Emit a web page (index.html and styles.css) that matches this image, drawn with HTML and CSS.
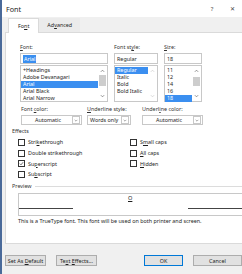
FILE: index.html
```html
<!DOCTYPE html>
<html lang="en">
<head>
    <meta charset="UTF-8">
    <title>Font</title>
    <link rel="stylesheet" href="styles.css">
</head>
<body>
    <div class="dialog">
        <div class="titlebar">
            <span class="title">Font</span>
            <span class="title-btn help">?</span>
            <span class="title-btn close">✕</span>
        </div>

        <div class="tabs">
            <div class="tab active">Fo<u>n</u>t</div>
            <div class="tab">Ad<u>v</u>anced</div>
        </div>

        <div class="panel">
            <div class="fields">
                <div class="field col-font">
                    <div class="label"><u>F</u>ont:</div>
                    <div class="input"><span class="sel-text">Arial</span></div>
                    <div class="list">
                        <div class="item">+Headings</div>
                        <div class="item">Adobe Devanagari</div>
                        <div class="item selected">Arial</div>
                        <div class="item">Arial Black</div>
                        <div class="item">Arial Narrow</div>
                        <div class="scroll">
                            <svg class="arrow" viewBox="0 0 6 4"><path d="M1 3L3 1L5 3" fill="none" stroke="#606060" stroke-width="0.8"/></svg>
                            <div class="thumb thumb-font"></div>
                            <svg class="arrow" viewBox="0 0 6 4"><path d="M1 1L3 3L5 1" fill="none" stroke="#606060" stroke-width="0.8"/></svg>
                        </div>
                    </div>
                </div>
                <div class="field col-style">
                    <div class="label">Font st<u>y</u>le:</div>
                    <div class="input">Regular</div>
                    <div class="list">
                        <div class="item selected">Regular</div>
                        <div class="item">Italic</div>
                        <div class="item">Bold</div>
                        <div class="item">Bold Italic</div>
                        <div class="scroll disabled">
                            <svg class="arrow" viewBox="0 0 6 4"><path d="M1 3L3 1L5 3" fill="none" stroke="#c8c8c8" stroke-width="0.8"/></svg>
                            <svg class="arrow" viewBox="0 0 6 4"><path d="M1 1L3 3L5 1" fill="none" stroke="#c8c8c8" stroke-width="0.8"/></svg>
                        </div>
                    </div>
                </div>
                <div class="field col-size">
                    <div class="label"><u>S</u>ize:</div>
                    <div class="input">18</div>
                    <div class="list">
                        <div class="item">11</div>
                        <div class="item">12</div>
                        <div class="item">14</div>
                        <div class="item">16</div>
                        <div class="item selected">18</div>
                        <div class="scroll">
                            <svg class="arrow" viewBox="0 0 6 4"><path d="M1 3L3 1L5 3" fill="none" stroke="#606060" stroke-width="0.8"/></svg>
                            <div class="thumb thumb-size"></div>
                            <svg class="arrow" viewBox="0 0 6 4"><path d="M1 1L3 3L5 1" fill="none" stroke="#606060" stroke-width="0.8"/></svg>
                        </div>
                    </div>
                </div>
            </div>

            <div class="combos">
                <div class="combo-field cf-color">
                    <div class="label">Font <u>c</u>olor:</div>
                    <div class="combo center"><span class="combo-text">Automatic</span><span class="drop"><svg viewBox="0 0 6 4"><path d="M1 1L3 3L5 1" fill="none" stroke="#606060" stroke-width="0.8"/></svg></span></div>
                </div>
                <div class="combo-field cf-ustyle">
                    <div class="label"><u>U</u>nderline style:</div>
                    <div class="combo"><span class="combo-text">Words only</span><span class="drop"><svg viewBox="0 0 6 4"><path d="M1 1L3 3L5 1" fill="none" stroke="#606060" stroke-width="0.8"/></svg></span></div>
                </div>
                <div class="combo-field cf-ucolor">
                    <div class="label">Underl<u>i</u>ne color:</div>
                    <div class="combo center"><span class="combo-text">Automatic</span><span class="drop"><svg viewBox="0 0 6 4"><path d="M1 1L3 3L5 1" fill="none" stroke="#606060" stroke-width="0.8"/></svg></span></div>
                </div>
            </div>

            <div class="group-head">Effects</div>
            <div class="effects">
                <div class="effects-col">
                    <div class="check"><span class="box"></span><span>Stri<u>k</u>ethrough</span></div>
                    <div class="check"><span class="box"></span><span>Double strikethrough</span></div>
                    <div class="check"><span class="box"><svg viewBox="0 0 6 6"><path d="M1 3.2L2.4 4.6L5 1.4" fill="none" stroke="#333" stroke-width="0.8"/></svg></span><span>Su<u>p</u>erscript</span></div>
                    <div class="check"><span class="box"></span><span>Su<u>b</u>script</span></div>
                </div>
                <div class="effects-col right">
                    <div class="check"><span class="box"></span><span>S<u>m</u>all caps</span></div>
                    <div class="check"><span class="box"></span><span><u>A</u>ll caps</span></div>
                    <div class="check"><span class="box"></span><span><u>H</u>idden</span></div>
                </div>
            </div>

            <div class="group-head line">Preview</div>
            <div class="preview">
                <span class="pline"></span>
                <span class="sample"><u>O</u></span>
                <span class="pline"></span>
            </div>
            <div class="note">This is a TrueType font. This font will be used on both printer and screen.</div>
        </div>

        <div class="footer">
            <button class="btn">Set As <u>D</u>efault</button>
            <button class="btn">Te<u>x</u>t <u>E</u>ffects...</button>
            <span class="spacer"></span>
            <button class="btn primary">OK</button>
            <button class="btn">Cancel</button>
        </div>
    </div>
</body>
</html>
```

FILE: styles.css
```css
body {
    margin: 0;
    width: 242px;
    height: 274px;
    overflow: hidden;
    background: #f0f0f0;
    font-family: "Noto Sans", "Open Sans", sans-serif;
    font-size: 5.4px;
    color: #1e1e1e;
}
u {
    text-decoration-thickness: 0.5px;
    text-underline-offset: 0.6px;
}
.dialog {
    display: flex;
    flex-direction: column;
    height: 274px;
    border-left: 2px solid #4a6a9a;
    box-sizing: border-box;
}
.titlebar {
    display: flex;
    align-items: center;
    height: 17px;
    background: #ffffff;
    padding-left: 4px;
}
.title {
    font-size: 7.2px;
    color: #222;
    flex: 1;
}
.title-btn {
    font-size: 6px;
    color: #444;
    width: 20px;
    text-align: center;
}
.close {
    font-size: 5.5px;
}
.tabs {
    display: flex;
    height: 15px;
    padding-left: 6px;
    align-items: flex-end;
}
.tab {
    height: 14px;
    line-height: 14px;
    padding: 0 8px;
    background: #ebebeb;
    box-sizing: border-box;
}
.tab.active {
    background: #ffffff;
    border: 1px solid #dadada;
    border-bottom: none;
    height: 15px;
    margin-bottom: -1px;
    position: relative;
    padding: 0 9px;
}
.panel {
    height: 212px;
    margin-left: 3px;
    background: #ffffff;
    border: 1px solid #dadada;
    border-right: none;
    box-sizing: border-box;
    padding: 11px 0 0 6px;
}
.fields {
    display: flex;
    gap: 6px;
    padding-left: 8px;
}
.label {
    height: 7px;
    line-height: 7px;
    margin-bottom: 2px;
    color: #333;
}
.input {
    height: 11px;
    line-height: 10px;
    border: 1px solid #c8c8c8;
    box-sizing: border-box;
    padding-left: 2px;
    margin-bottom: 1px;
}
.sel-text {
    background: #3b8ff0;
    color: #ffffff;
    padding: 0 1px;
}
.list {
    position: relative;
    height: 37px;
    border: 1px solid #c8c8c8;
    box-sizing: border-box;
    padding-top: 1px;
}
.item {
    height: 7px;
    line-height: 7px;
    padding-left: 2px;
    margin-right: 9px;
}
.item.selected {
    background: #3b8ff0;
    color: #ffffff;
}
.scroll {
    position: absolute;
    top: 1px;
    right: 1px;
    bottom: 1px;
    width: 8px;
    display: flex;
    flex-direction: column;
    align-items: center;
}
.arrow {
    width: 5px;
    height: 4px;
    margin: 2px 0;
}
.scroll .arrow:last-child {
    margin-top: auto;
}
.thumb {
    width: 7px;
    background: #cdcdcd;
}
.thumb-font {
    height: 11px;
}
.thumb-size {
    height: 9px;
    margin-top: 2px;
}
.col-font { width: 88px; }
.col-style { width: 44px; }
.col-size { width: 38px; }

.combos {
    display: flex;
    margin-top: 4px;
    padding-left: 9px;
}
.cf-color { width: 61px; }
.cf-ustyle { width: 44px; margin-left: 5px; }
.cf-ucolor { width: 61px; margin-left: 11px; }
.combo {
    display: flex;
    align-items: center;
    height: 10px;
    border: 1px solid #c8c8c8;
    box-sizing: border-box;
    padding-left: 2px;
}
.combo-text {
    flex: 1;
}
.combo.center .combo-text {
    text-align: center;
}
.drop {
    width: 6px;
    height: 6px;
    border: 1px solid #c8c8c8;
    margin-right: 1px;
    display: flex;
    align-items: center;
    justify-content: center;
}
.drop svg {
    width: 4px;
    height: 3px;
}
.group-head {
    height: 7px;
    line-height: 7px;
    margin-top: 3px;
    color: #333;
    display: flex;
    align-items: center;
    gap: 3px;
}
.group-head.line::after {
    content: "";
    flex: 1;
    border-top: 1px solid #dcdcdc;
}
.effects {
    display: flex;
    padding: 2px 0 0 6px;
}
.effects-col {
    width: 149px;
}
.check {
    display: flex;
    align-items: center;
    height: 10.7px;
    gap: 3px;
}
.box {
    width: 5px;
    height: 5px;
    border: 0.8px solid #333;
    background: #fff;
    display: flex;
}
.box svg {
    width: 5px;
    height: 5px;
}
.preview {
    display: flex;
    align-items: flex-start;
    height: 23px;
    margin: 3px 0 0 6px;
    border: 1px solid #c8c8c8;
    border-right: none;
    box-sizing: border-box;
}
.pline {
    width: 54px;
    border-top: 1px solid #444;
    margin-top: 14px;
}
.pline:last-child {
    margin-left: auto;
}
.sample {
    margin-left: 55px;
    font-size: 5.6px;
    line-height: 7px;
    margin-top: 1px;
}
.note {
    margin: 2px 0 0 6px;
    line-height: 7px;
}
.footer {
    display: flex;
    align-items: center;
    gap: 10px;
    padding: 11px 0 0 3px;
}
.btn {
    font-family: inherit;
    font-size: 5.4px;
    color: #222;
    height: 11px;
    width: 41px;
    padding: 0;
    background: #e1e1e1;
    border: 1px solid #adadad;
    box-sizing: border-box;
}
.btn.primary {
    border-color: #0078d7;
    width: 39px;
}
.btn:last-child {
    width: 49px;
}
.spacer {
    flex: 1;
}
```
